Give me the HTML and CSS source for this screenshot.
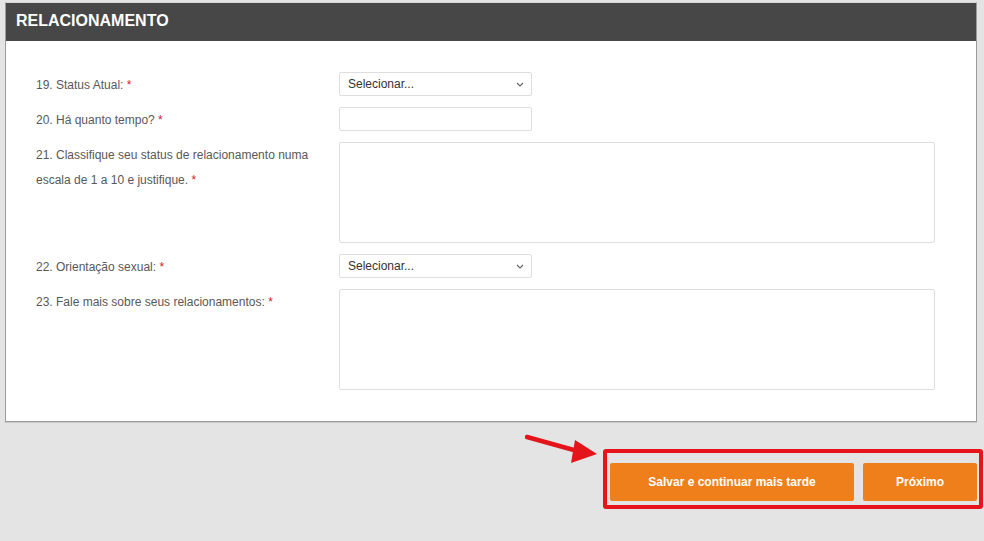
FILE: index.html
```html
<!DOCTYPE html>
<html lang="pt">
<head>
<meta charset="utf-8">
<title>Relacionamento</title>
<link rel="stylesheet" href="styles.css">
</head>
<body>
<div class="page">
  <section class="panel">
    <header class="panel-head">RELACIONAMENTO</header>
    <div class="panel-body">
      <div class="row">
        <div class="label">19. Status Atual: <span class="req">*</span></div>
        <div class="select"><span>Selecionar...</span><svg width="8" height="5" viewBox="0 0 8 5"><path d="M1 1l3 3 3-3" fill="none" stroke="#666" stroke-width="1.2"/></svg></div>
      </div>
      <div class="row">
        <div class="label">20. Há quanto tempo? <span class="req">*</span></div>
        <div class="input"></div>
      </div>
      <div class="row">
        <div class="label">21. Classifique seu status de relacionamento numa escala de 1 a 10 e justifique.&nbsp;<span class="req">*</span></div>
        <div class="textarea"></div>
      </div>
      <div class="row">
        <div class="label">22. Orientação sexual: <span class="req">*</span></div>
        <div class="select"><span>Selecionar...</span><svg width="8" height="5" viewBox="0 0 8 5"><path d="M1 1l3 3 3-3" fill="none" stroke="#666" stroke-width="1.2"/></svg></div>
      </div>
      <div class="row">
        <div class="label">23. Fale mais sobre seus relacionamentos: <span class="req">*</span></div>
        <div class="textarea"></div>
      </div>
    </div>
  </section>
  <div class="actions">
    <svg class="arrow" width="80" height="34" viewBox="0 0 80 34"><path d="M2 4 L56 19" stroke="#e3151a" stroke-width="4.5" stroke-linecap="round"/><path d="M50 7 L72 21 L46 30 Z" fill="#e3151a"/></svg>
    <div class="highlight">
      <button class="btn btn-save">Salvar e continuar mais tarde</button>
      <button class="btn btn-next">Próximo</button>
    </div>
  </div>
</div>
</body>
</html>
```

FILE: styles.css
```css
html, body {
  margin: 0;
  padding: 0;
  background: #e4e4e4;
  font-family: "Liberation Sans", Arial, sans-serif;
}
.page {
  width: 984px;
  height: 541px;
  overflow: hidden;
  padding-top: 2px;
  box-sizing: border-box;
}
.panel {
  margin-left: 5px;
  width: 972px;
  background: #fff;
  border: 1px solid #9c9c9c;
  border-top: 1px solid #d8d8d8;
  box-sizing: border-box;
  box-shadow: 0 1px 0 #c8c8c8;
}
.panel-head {
  background: #474747;
  color: #fff;
  font-weight: bold;
  font-size: 16px;
  height: 38px;
  line-height: 36px;
  padding-left: 10px;
}
.panel-body {
  padding: 31px 0 31px 30px;
  display: flex;
  flex-direction: column;
  gap: 11px;
}
.row {
  display: flex;
  align-items: flex-start;
}
.label {
  width: 303px;
  flex: none;
  font-size: 12px;
  line-height: 25px;
  padding-top: 1px;
  margin-bottom: -2px;
  color: #585858;
  padding-right: 8px;
  box-sizing: border-box;
}
.req {
  color: #d2232a;
}
.select, .input {
  width: 193px;
  height: 24px;
  border: 1px solid #dedede;
  border-radius: 2px;
  box-sizing: border-box;
}
.select {
  display: flex;
  align-items: center;
  justify-content: space-between;
  padding: 0 7px 0 8px;
  font-size: 12px;
  color: #333;
}
.textarea {
  width: 596px;
  height: 101px;
  border: 1px solid #dedede;
  border-radius: 2px;
  box-sizing: border-box;
}
.actions {
  position: relative;
  display: flex;
  justify-content: flex-end;
  padding-top: 27px;
  padding-right: 1px;
}
.arrow {
  position: absolute;
  left: 525px;
  top: 11px;
}
.highlight {
  display: flex;
  gap: 9px;
  border: 4px solid #e8141b;
  border-radius: 3px;
  padding: 10px 2px 4px 3px;
  background: #e4e4e4;
}
.btn {
  height: 38px;
  border: none;
  border-radius: 2px;
  background: #ef7f1a;
  color: #fff;
  font-family: "Liberation Sans", Arial, sans-serif;
  font-weight: bold;
  font-size: 12px;
  padding: 0;
}
.btn-save {
  width: 244px;
}
.btn-next {
  width: 114px;
}
```
